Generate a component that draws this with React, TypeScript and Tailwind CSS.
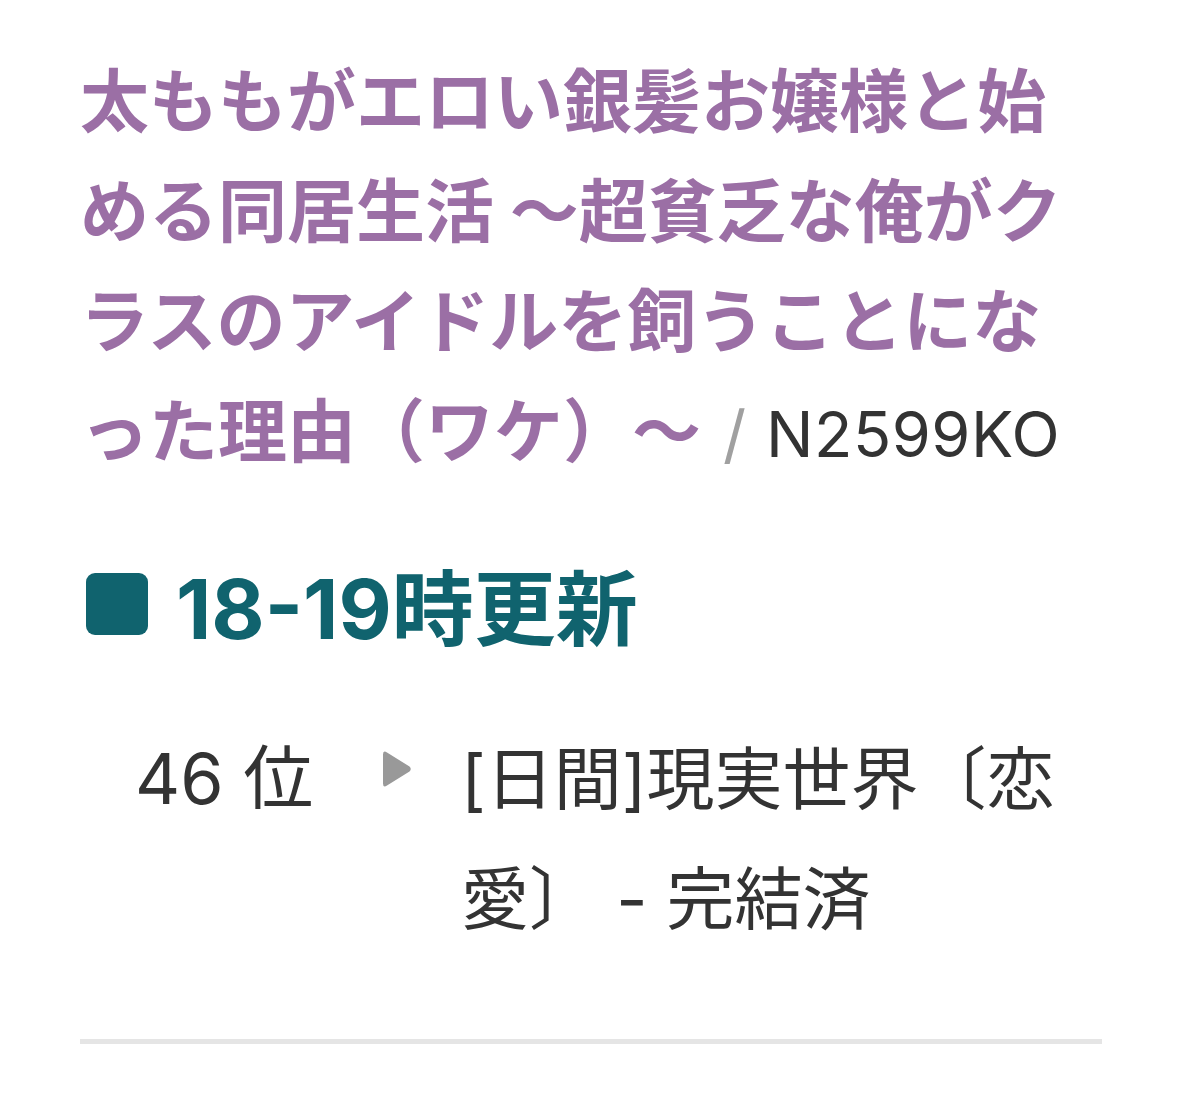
const latin = "font-['Inter','Noto_Sans_CJK_JP',sans-serif]";

function PlayMarker() {
  return (
    <svg width="29" height="40" viewBox="0 0 29 40" className="shrink-0 mt-[30px]">
      <path
        d="M4 3.5 Q0 1 0 5.5 V34.5 Q0 39 4 36.5 L26.5 22.5 Q29 20 26.5 17.5 Z"
        fill="#999999"
      />
    </svg>
  )
}

export default function App() {
  return (
    <div className="min-h-[1113px] w-full bg-white pl-[80px] pr-[77px] pt-[42px]">
      {/* Work title with ncode */}
      <p className="text-[69px] leading-[110px] font-bold text-[#9b6fa5] font-['Noto_Sans_CJK_JP',sans-serif]">
        太ももがエロい銀髪お嬢様と始める同居生活 〜超貧乏な俺がクラスのアイドルを飼うことになった理由（ワケ）〜
        <span className={`ml-[22px] mr-[20px] font-normal text-[#a0a0a0] text-[64px] ${latin}`}>/</span>
        <span className={`font-normal text-[#333333] text-[63px] tracking-[0.5px] ${latin}`}>N2599KO</span>
      </p>

      {/* Update slot heading */}
      <div className="mt-[70px] flex items-center h-[96px]">
        <div className="ml-[6px] mt-[-6px] w-[62px] h-[62px] rounded-[9px] bg-[#10636e] shrink-0" />
        <h2 className={`ml-[28px] pt-[6px] text-[82px] leading-[96px] font-bold text-[#10636e] ${latin}`}>
          18-19時更新
        </h2>
      </div>

      {/* Ranking entry */}
      <div className={`mt-[64px] flex items-start text-[70px] leading-[120px] text-[#333333] ${latin}`}>
        <div className="pl-[55px] w-[303px] shrink-0">46 位</div>
        <PlayMarker />
        <div className="ml-[49px] flex-1 text-[68px]">[日間]現実世界〔恋愛〕 - 完結済</div>
      </div>

      <div className="mt-[80px] h-[5px] bg-[#e5e5e5]" />
    </div>
  )
}
